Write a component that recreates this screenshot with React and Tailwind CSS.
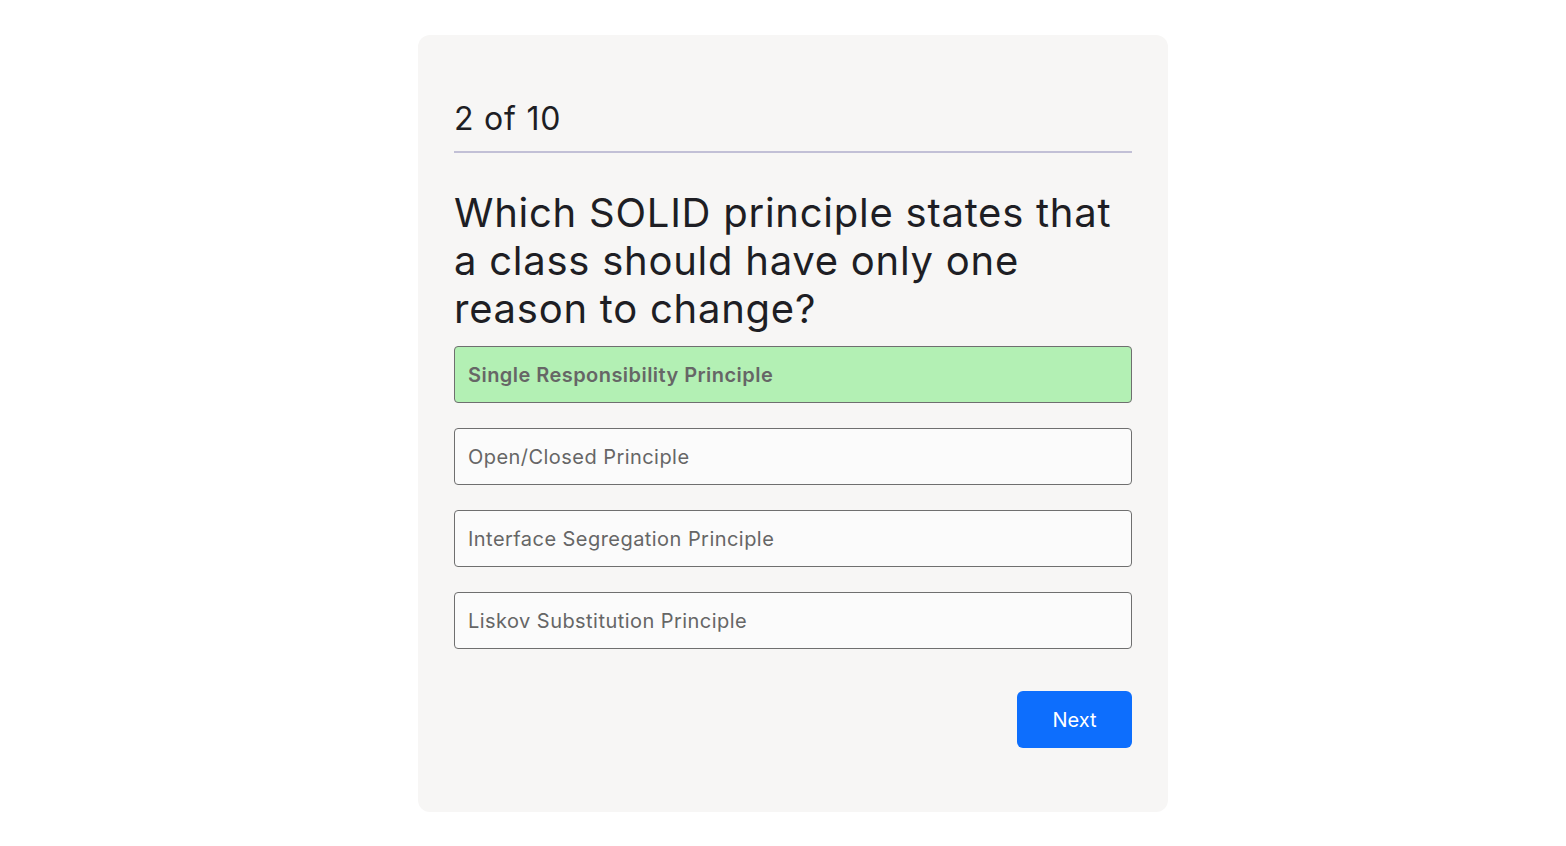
import React, { useState } from "react";

const options = [
  "Single Responsibility Principle",
  "Open/Closed Principle",
  "Interface Segregation Principle",
  "Liskov Substitution Principle",
];

export default function App() {
  const [selected, setSelected] = useState(0);

  return (
    <div className="min-h-screen bg-white pt-[35px] pl-5 font-['Inter',sans-serif]">
      <div className="mx-auto w-[750px] rounded-xl bg-[#f7f6f5] px-9 pt-[64px] pb-[64px]">
        {/* progress */}
        <h2 className="text-[32px] leading-[40px] font-normal tracking-[0.8px] text-[#1e1e24]">2 of 10</h2>
        <div className="mt-3 h-[2px] bg-[#c2c0d6]" />

        {/* question */}
        <h1 className="mt-9 text-[40px] leading-[48px] font-normal tracking-[0.75px] text-[#1e1e24]">
          Which SOLID principle states that a class should have only one reason to change?
        </h1>

        <div className="mt-[13px] flex flex-col gap-[25px]">
          {options.map((opt, i) => (
            <button
              key={opt}
              onClick={() => setSelected(i)}
              className={
                "h-[57px] w-full rounded border border-[#6f6f6f] px-[13px] text-left text-[20px] tracking-[0.45px] text-[#666666] " +
                (selected === i ? "bg-[#b3f0b4] font-semibold" : "bg-[#fbfbfb]")
              }
            >
              {opt}
            </button>
          ))}
        </div>

        <div className="mt-[42px] flex justify-end">
          <button className="h-[57px] w-[115px] rounded-md bg-[#0d6efd] text-[20px] text-white">Next</button>
        </div>
      </div>
    </div>
  );
}
